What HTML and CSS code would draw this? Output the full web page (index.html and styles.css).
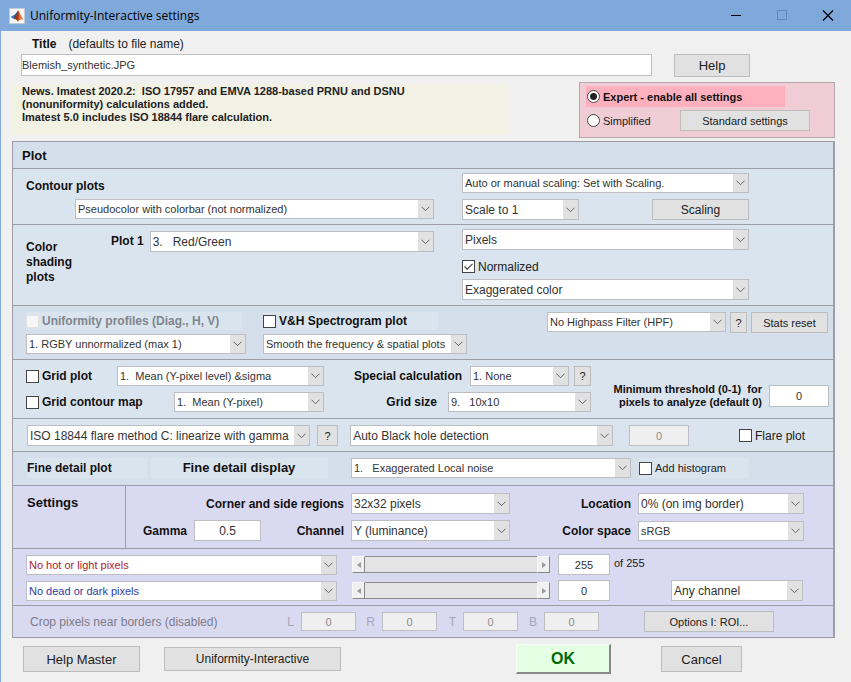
FILE: index.html
```html
<!DOCTYPE html>
<html lang="en">

<head>
    <meta charset="UTF-8">
    <meta name="viewport" content="width=device-width, initial-scale=1.0">
    <title>Uniformity-Interactive settings</title>
    <link rel="stylesheet" href="styles.css">
</head>

<body>
    <header class="titlebar">
        <svg class="app-icon" viewBox="0 0 16 16">
            <rect x="0.5" y="0.5" width="15" height="15" fill="#f4f6f8" stroke="#c3ccd6" />
            <path d="M1.5 9 L5.5 6.8 L8 9 L5 11.2 Z" fill="#3f7fc0" />
            <path d="M5.5 6.8 C7 6.3 8 3.5 9.2 2.6 L8.6 9.6 L5 11.2 Z" fill="#27507e" />
            <path d="M9.2 2.6 C10.6 3.6 12 9 14.6 12 C12.6 10.9 11.6 10.8 9 13.6 C8 11.6 6.4 10.6 5 11.2 C7.6 9.6 8.2 5 9.2 2.6 Z" fill="#e0702a" />
            <path d="M9.2 2.6 C10.1 5 9.8 9.5 9 13.6 C8 11.6 6.4 10.6 5 11.2 C7.6 9.6 8.2 5 9.2 2.6 Z" fill="#a3301a" />
        </svg>
        <h1 class="window-title">Uniformity-Interactive settings</h1>
        <div class="window-buttons">
            <button class="window-button" aria-label="Minimize">
                <svg viewBox="0 0 12 12"><path d="M1 5.5 H11" stroke="#000" /></svg>
            </button>
            <button class="window-button" aria-label="Maximize" disabled>
                <svg viewBox="0 0 12 12"><rect x="1.5" y="0.5" width="9" height="9" fill="none" stroke="#6389b4" /></svg>
            </button>
            <button class="window-button" aria-label="Close">
                <svg viewBox="0 0 12 12"><path d="M1 0.5 L11 10.5 M11 0.5 L1 10.5" stroke="#000" stroke-width="1.2" /></svg>
            </button>
        </div>
    </header>

    <main>
        <div class="title-label">
            <label for="title" class="bold">Title</label>
            <span>(defaults to file name)</span>
        </div>
        <div class="title-row">
            <input type="text" id="title" class="title-input" value="Blemish_synthetic.JPG">
            <button class="large help-button">Help</button>
        </div>

        <div class="top-row">
            <p class="news">News. Imatest 2020.2:&nbsp; ISO 17957 and EMVA 1288-based PRNU and DSNU<br>(nonuniformity) calculations added.<br>Imatest 5.0 includes ISO 18844 flare calculation.</p>
            <div class="mode">
                <label class="check small bold expert"><input type="radio" name="mode" checked>Expert - enable all settings</label>
                <div class="mode-row">
                    <label class="check small"><input type="radio" name="mode">Simplified</label>
                    <button class="standard-button">Standard settings</button>
                </div>
            </div>
        </div>

        <div class="panel">
            <section class="section dim plot-head">
                <h2>Plot</h2>
            </section>

            <!-- Contour plots -->
            <section class="section contour">
                <h3 class="contour-title">Contour plots</h3>
                <select class="small" aria-label="Scaling mode">
                    <option>Auto or manual scaling: Set with Scaling.</option>
                </select>
                <select class="small contour-select" aria-label="Contour plot type">
                    <option>Pseudocolor with colorbar (not normalized)</option>
                </select>
                <div class="spread">
                    <select class="scale-select" aria-label="Scale">
                        <option>Scale to 1</option>
                    </select>
                    <button class="medium scaling-button">Scaling</button>
                </div>
            </section>

            <!-- Color shading plots -->
            <section class="section shading">
                <div class="shading-left">
                    <h3 class="shading-title">Color<br>shading<br>plots</h3>
                    <label for="plot1" class="bold">Plot 1</label>
                    <select id="plot1" class="grow">
                        <option>3. &nbsp; Red/Green</option>
                    </select>
                </div>
                <div class="shading-right">
                    <select aria-label="Units">
                        <option>Pixels</option>
                    </select>
                    <label class="check"><input type="checkbox" checked>Normalized</label>
                    <select aria-label="Color display">
                        <option>Exaggerated color</option>
                    </select>
                </div>
            </section>

            <!-- Profiles and spectrogram -->
            <section class="section dim profiles">
                <div class="stack profile-group">
                    <label class="check bold patch disabled"><input type="checkbox" disabled>Uniformity profiles (Diag., H, V)</label>
                    <select class="small" aria-label="Uniformity profile">
                        <option>1. RGBY unnormalized (max 1)</option>
                    </select>
                </div>
                <div class="stack spectrogram-group">
                    <label class="check bold patch"><input type="checkbox">V&amp;H Spectrogram plot</label>
                    <select class="small" aria-label="Spectrogram smoothing">
                        <option>Smooth the frequency &amp; spatial plots</option>
                    </select>
                </div>
                <div class="filter-group">
                    <select class="small filter-select" aria-label="Highpass filter">
                        <option>No Highpass Filter (HPF)</option>
                    </select>
                    <button class="question">?</button>
                    <button class="stats-button">Stats reset</button>
                </div>
            </section>

            <!-- Grid plots -->
            <section class="section grids">
                <div class="stack grid-group">
                    <div class="spread">
                        <label class="check bold"><input type="checkbox">Grid plot</label>
                        <select class="small grid-select" aria-label="Grid plot type">
                            <option>1. &nbsp;Mean (Y-pixel level) &amp;sigma</option>
                        </select>
                    </div>
                    <div class="spread">
                        <label class="check bold"><input type="checkbox">Grid contour map</label>
                        <select class="small map-select" aria-label="Grid contour map type">
                            <option>1. &nbsp;Mean (Y-pixel)</option>
                        </select>
                    </div>
                </div>
                <div class="stack calc-group">
                    <div class="spread">
                        <label for="special" class="bold">Special calculation</label>
                        <div class="calc-controls">
                            <select id="special" class="small calc-select">
                                <option>1. None</option>
                            </select>
                            <button class="question">?</button>
                        </div>
                    </div>
                    <div class="calc-size">
                        <label for="grid-size" class="bold">Grid size</label>
                        <select id="grid-size" class="small size-select">
                            <option>9. &nbsp; 10x10</option>
                        </select>
                    </div>
                </div>
                <div class="threshold">
                    <label for="threshold">Minimum threshold (0-1)&nbsp; for<br>pixels to analyze (default 0)</label>
                    <input type="text" id="threshold" class="number threshold-input" value="0">
                </div>
            </section>

            <!-- Flare -->
            <section class="section flare">
                <select class="iso-select" aria-label="Flare method">
                    <option>ISO 18844 flare method C: linearize with gamma</option>
                </select>
                <button class="question wide">?</button>
                <select class="hole-select" aria-label="Black hole detection">
                    <option>Auto Black hole detection</option>
                </select>
                <input type="text" class="number hole-input" value="0" aria-label="Black hole value" disabled>
                <label class="check flare-check"><input type="checkbox">Flare plot</label>
            </section>

            <!-- Fine detail -->
            <section class="section dim fine">
                <h3 class="patch fine-plot">Fine detail plot</h3>
                <h2 class="patch fine-display">Fine detail display</h2>
                <select class="small fine-select" aria-label="Fine detail display">
                    <option>1. &nbsp; Exaggerated Local noise</option>
                </select>
                <label class="check small patch histogram"><input type="checkbox">Add histogram</label>
            </section>

            <!-- Settings -->
            <section class="section purple settings">
                <h2 class="settings-title">Settings</h2>
                <div class="settings-body">
                    <label for="regions" class="bold regions-label">Corner and side regions</label>
                    <select id="regions">
                        <option>32x32 pixels</option>
                    </select>
                    <label for="location" class="bold">Location</label>
                    <select id="location">
                        <option>0% (on img border)</option>
                    </select>
                    <label for="gamma" class="bold">Gamma</label>
                    <input type="text" id="gamma" class="number medium" value="0.5">
                    <label for="channel" class="bold">Channel</label>
                    <select id="channel">
                        <option>Y (luminance)</option>
                    </select>
                    <label for="color-space" class="bold">Color space</label>
                    <select id="color-space" class="small">
                        <option>sRGB</option>
                    </select>
                </div>
            </section>

            <!-- Hot and dead pixels -->
            <section class="section purple pixels">
                <select class="small red" aria-label="Hot pixels">
                    <option>No hot or light pixels</option>
                </select>
                <div class="slider">
                    <button class="slider-button" aria-label="Decrease hot threshold"><svg viewBox="0 0 4 6"><path d="M4 0 V6 L0 3 Z" fill="#999" /></svg></button>
                    <input type="range" min="0" max="255" value="255" aria-label="Hot threshold">
                    <button class="slider-button" aria-label="Increase hot threshold"><svg viewBox="0 0 4 6"><path d="M0 0 V6 L4 3 Z" fill="#999" /></svg></button>
                </div>
                <input type="text" class="number" value="255" aria-label="Hot threshold value">
                <span class="small of-255">of 255</span>
                <select class="small blue" aria-label="Dead pixels">
                    <option>No dead or dark pixels</option>
                </select>
                <div class="slider">
                    <button class="slider-button" aria-label="Decrease dead threshold"><svg viewBox="0 0 4 6"><path d="M4 0 V6 L0 3 Z" fill="#999" /></svg></button>
                    <input type="range" min="0" max="255" value="0" aria-label="Dead threshold">
                    <button class="slider-button" aria-label="Increase dead threshold"><svg viewBox="0 0 4 6"><path d="M0 0 V6 L4 3 Z" fill="#999" /></svg></button>
                </div>
                <input type="text" class="number" value="0" aria-label="Dead threshold value">
                <select class="any-select" aria-label="Pixel channel">
                    <option>Any channel</option>
                </select>
            </section>

            <!-- Crop -->
            <section class="section purple crop">
                <span class="crop-title">Crop pixels near borders (disabled)</span>
                <div class="crop-fields">
                    <label for="crop-l">L</label>
                    <input type="text" id="crop-l" class="number" value="0" disabled>
                    <label for="crop-r">R</label>
                    <input type="text" id="crop-r" class="number" value="0" disabled>
                    <label for="crop-t">T</label>
                    <input type="text" id="crop-t" class="number" value="0" disabled>
                    <label for="crop-b">B</label>
                    <input type="text" id="crop-b" class="number" value="0" disabled>
                </div>
                <button class="options-button">Options I: ROI...</button>
            </section>
        </div>

        <footer class="footer">
            <button class="large help-master">Help Master</button>
            <button class="medium uniformity">Uniformity-Interactive</button>
            <button class="ok">OK</button>
            <button class="large cancel">Cancel</button>
        </footer>
    </main>
</body>

</html>
```
FILE: styles.css
```css
* {
    margin: 0;
    padding: 0;
    box-sizing: border-box;
}

body {
    font-family: "Liberation Sans", Arial, sans-serif;
    font-size: 12px;
    line-height: 14px;
    color: #222;
    background-color: #f0f0f0;
    border-left: 1px solid #7fa9db;
    min-height: 100vh;
}

/* Title bar */
.titlebar {
    display: flex;
    align-items: center;
    height: 31px;
    padding-left: 8px;
    background-color: #7fa9db;
}

.app-icon {
    width: 16px;
    height: 16px;
}

.window-title {
    margin-left: 5px;
    font-family: "Open Sans", "Noto Sans", sans-serif;
    font-size: 12px;
    font-weight: normal;
    color: #000;
}

.window-buttons {
    display: flex;
    margin-left: auto;
}

.window-button {
    display: flex;
    align-items: center;
    justify-content: center;
    width: 46px;
    height: 30px;
    border: none;
    background: none;
}

.window-button svg {
    width: 12px;
    height: 12px;
}

/* Controls */
button {
    height: 21px;
    border: 1px solid #bcbcbc;
    background-color: #e1e1e1;
    font-family: inherit;
    font-size: 11px;
    color: #222;
}

select,
input[type="text"] {
    width: 100%;
    min-width: 0;
    height: 21px;
    border: 1px solid #bcbec4;
    border-radius: 0;
    background-color: #fff;
    font-family: inherit;
    font-size: 12px;
    color: #333;
}

select {
    appearance: none;
    padding: 0 16px 0 2px;
    background-image:
        url("data:image/svg+xml,%3Csvg xmlns='http://www.w3.org/2000/svg' width='9' height='6'%3E%3Cpath d='M.5 .7 4.5 4.7 8.5 .7' fill='none' stroke='%23666'/%3E%3C/svg%3E"),
        linear-gradient(#e1e1e1, #e1e1e1);
    background-repeat: no-repeat;
    background-position: right 3px center, right center;
    background-size: 9px 6px, 15px 100%;
}

input[type="checkbox"],
input[type="radio"] {
    appearance: none;
    flex: none;
    width: 13px;
    height: 13px;
    border: 1px solid #444;
    background-color: #fff;
}

input[type="radio"] {
    border-radius: 50%;
}

input[type="radio"]:checked {
    background-image: radial-gradient(circle, #222 3px, #fff 4px);
}

input[type="checkbox"]:checked {
    background-image: url("data:image/svg+xml,%3Csvg xmlns='http://www.w3.org/2000/svg' width='11' height='11'%3E%3Cpath d='M1.5 5.5 4.2 8.2 9.5 2.8' fill='none' stroke='%23444' stroke-width='1.2'/%3E%3C/svg%3E");
}

input[type="checkbox"]:disabled {
    border-color: #e2e2e2;
    background-color: #f6f6f6;
}

select.small {
    height: 20px;
}

select.small,
.small {
    font-size: 11px;
}

.medium,
input.medium {
    font-size: 12px;
}

.large {
    font-size: 13px;
}

input.number {
    text-align: center;
    font-size: 11px;
}

input.number.medium {
    font-size: 12px;
}

input.number:disabled {
    background-color: #efefef;
    color: #8c8c8c;
}

.bold {
    font-weight: bold;
    color: #111;
}

select.red {
    color: #b02030;
}

select.blue {
    color: #3040a0;
}

.grow {
    flex: 1;
}

.check {
    display: flex;
    align-items: center;
    gap: 3px;
}

.disabled {
    color: #7f868d;
}

.spread {
    display: flex;
    justify-content: space-between;
    align-items: center;
}

.stack {
    display: flex;
    flex-direction: column;
}

.question {
    flex: none;
    width: 17px;
}

.question.wide {
    width: 21px;
}

h2 {
    font-size: 13px;
    color: #111;
}

h3 {
    font-size: 12px;
    color: #111;
}

/* Top area */
main {
    padding: 6px 16px 8px 11px;
}

.title-label {
    display: flex;
    gap: 12px;
    padding-left: 20px;
}

.title-row {
    display: flex;
    gap: 22px;
    margin-top: 3px;
    padding: 0 85px 0 9px;
}

.title-row .title-input {
    height: 22px;
    font-size: 11px;
}

.help-button {
    flex: none;
    width: 76px;
    height: 23px;
}

.top-row {
    display: flex;
    justify-content: space-between;
    align-items: flex-start;
    margin-top: 5px;
}

.news {
    width: 496px;
    height: 51px;
    margin-top: 2px;
    padding: 1px 10px;
    background-color: #f1f1e4;
    font-size: 11px;
    font-weight: bold;
    line-height: 13px;
}

.mode {
    width: 256px;
    height: 56px;
    padding: 3px 6px;
    border: 1px solid #b4a6ab;
    background-color: #f0ccd7;
}

.expert {
    width: 199px;
    height: 21px;
    padding-left: 1px;
    background-color: #ffb0be;
}

.mode-row {
    display: flex;
    align-items: center;
    justify-content: space-between;
    margin-top: 3px;
    padding: 0 18px 0 1px;
}

.standard-button {
    width: 130px;
}

/* Main panel */
.panel {
    margin-top: 3px;
    border: 1px solid #9b9fa5;
    border-right-width: 2px;
}

.section {
    border-bottom: 1px solid #9b9fa5;
    background-color: #dae4ee;
}

.section:last-child {
    border-bottom: none;
}

.dim {
    background-color: #d5dfeb;
}

.purple {
    background-color: #d9d9f1;
}

.patch {
    background-color: #dae4ee;
}

.plot-head {
    padding: 7px 9px 5px;
}

.contour {
    display: grid;
    grid-template-columns: 1fr 287px;
    grid-template-rows: 20px 21px;
    gap: 6px 28px;
    padding: 4px 84px 4px 13px;
}

.contour-title {
    align-self: end;
}

.contour-select {
    justify-self: end;
    width: calc(100% - 49px);
}

.scale-select {
    width: 117px;
}

.scaling-button {
    width: 97px;
}

.shading {
    display: flex;
    gap: 28px;
    padding: 4px 84px 5px 13px;
}

.shading-left {
    display: flex;
    flex: 1;
    align-items: flex-start;
    gap: 6px;
    padding-top: 2px;
}

.shading-left label {
    line-height: 21px;
}

.shading-title {
    width: 79px;
    padding-top: 9px;
    line-height: 15px;
}

.shading-right {
    width: 287px;
}

.shading-right .check {
    height: 29px;
    padding-top: 4px;
}

.profiles {
    display: flex;
    padding: 6px 5px 5px 13px;
}

.profile-group {
    width: 220px;
    gap: 4px;
}

.spectrogram-group {
    width: 204px;
    margin-left: 17px;
    gap: 4px;
}

.profiles .check {
    height: 18px;
}

.profile-group .check {
    width: 216px;
}

.spectrogram-group .check {
    width: 175px;
}

.filter-group {
    display: flex;
    gap: 4px;
    margin-left: auto;
}

.filter-select {
    width: 179px;
}

.stats-button {
    width: 77px;
}

.grids {
    display: flex;
    align-items: center;
    padding: 6px 4px 6px 13px;
}

.grid-group {
    width: 298px;
    gap: 6px;
}

.grid-select {
    width: 207px;
}

.map-select {
    width: 150px;
}

.calc-group {
    width: 237px;
    margin-left: 30px;
    gap: 6px;
}

.calc-controls {
    display: flex;
    gap: 5px;
}

.calc-controls .question {
    height: 20px;
}

.calc-controls .calc-select {
    width: 99px;
}

.calc-size {
    display: flex;
    justify-content: flex-end;
    align-items: center;
    gap: 11px;
}

.calc-size .size-select {
    width: 143px;
}

.threshold {
    display: flex;
    align-items: center;
    gap: 7px;
    margin-left: auto;
    padding-top: 14px;
    text-align: right;
    font-size: 11px;
    font-weight: bold;
    line-height: 13px;
    color: #111;
}

.threshold label {
    white-space: nowrap;
}

.threshold .threshold-input {
    width: 60px;
    height: 22px;
}

.flare {
    display: flex;
    align-items: center;
    padding: 6px 28px 5px 14px;
}

.iso-select {
    flex: 284;
}

.flare .question {
    margin: 0 12px 0 7px;
}

.hole-select {
    flex: 262;
}

.flare .hole-input {
    width: 60px;
    margin-left: 16px;
}

.flare-check {
    margin-left: 50px;
}

.fine {
    display: flex;
    align-items: center;
    padding: 6px 84px 7px 14px;
}

.fine-plot {
    width: 120px;
    line-height: 20px;
}

.fine-display {
    width: 178px;
    margin-left: 3px;
    text-align: center;
    line-height: 20px;
}

.fine-select {
    flex: 1;
    margin-left: 23px;
}

.histogram {
    width: 110px;
    height: 20px;
    margin-left: 8px;
}

/* Settings */
.settings {
    display: flex;
}

.settings-title {
    width: 113px;
    padding: 10px 14px;
    border-right: 1px solid #9b9fa5;
}

.settings-body {
    display: grid;
    flex: 1;
    grid-template-columns: 61px 67px 76px 159px 1fr 166px;
    align-items: center;
    gap: 6px 7px;
    padding: 7px 29px 7px 0;
    text-align: right;
}

.regions-label {
    grid-column: span 3;
}

.pixels {
    display: grid;
    grid-template-columns: 1fr 198px 60px 61px 132px;
    align-items: center;
    gap: 5px 0;
    padding: 5px 30px 4px 13px;
}

.pixels select.small {
    width: calc(100% - 15px);
}

.pixels input.number {
    width: 52px;
    margin-left: 8px;
}

.of-255 {
    grid-column: span 2;
    padding: 0 0 4px 4px;
}

.pixels .any-select {
    grid-column: 5;
}

.slider {
    display: flex;
    height: 17px;
}

.slider-button {
    display: flex;
    flex: none;
    align-items: center;
    justify-content: center;
    width: 13px;
    height: 17px;
    border: 1px solid #f8f8f8;
    border-right-color: #888;
    border-bottom-color: #888;
    background-color: #f0f0f0;
}

.slider-button svg {
    width: 4px;
    height: 6px;
}

.slider input {
    appearance: none;
    flex: 1;
    min-width: 0;
    height: 17px;
    border-top: 1px solid #8c8c8c;
    border-bottom: 1px solid #8c8c8c;
    background-color: #e4e4e4;
}

.slider input::-webkit-slider-thumb {
    appearance: none;
    width: 1px;
    height: 15px;
}

.crop {
    display: flex;
    align-items: center;
    padding: 5px 59px 5px 17px;
    color: #7d7d88;
}

.crop-title {
    flex: 1;
}

.crop-fields {
    display: grid;
    grid-template-columns: repeat(4, 12px 55px);
    align-items: center;
    column-gap: 7px;
    margin-right: 45px;
    text-align: right;
    color: #a5a5bb;
}

.crop-fields .number {
    height: 19px;
}

.options-button {
    width: 130px;
}

.footer {
    display: flex;
    align-items: center;
    margin-top: 6px;
    padding: 0 93px 0 11px;
}

.help-master {
    width: 117px;
    height: 26px;
}

.uniformity {
    width: 177px;
    height: 24px;
    margin-left: 24px;
}

.ok {
    width: 95px;
    height: 30px;
    margin-left: auto;
    border: 1px solid #f4fff4;
    border-right: 2px solid #888;
    border-bottom: 2px solid #888;
    background-color: #e4ffe4;
    font-size: 16px;
    font-weight: bold;
    color: #006a00;
}

.cancel {
    width: 81px;
    height: 26px;
    margin-left: 50px;
}
```
